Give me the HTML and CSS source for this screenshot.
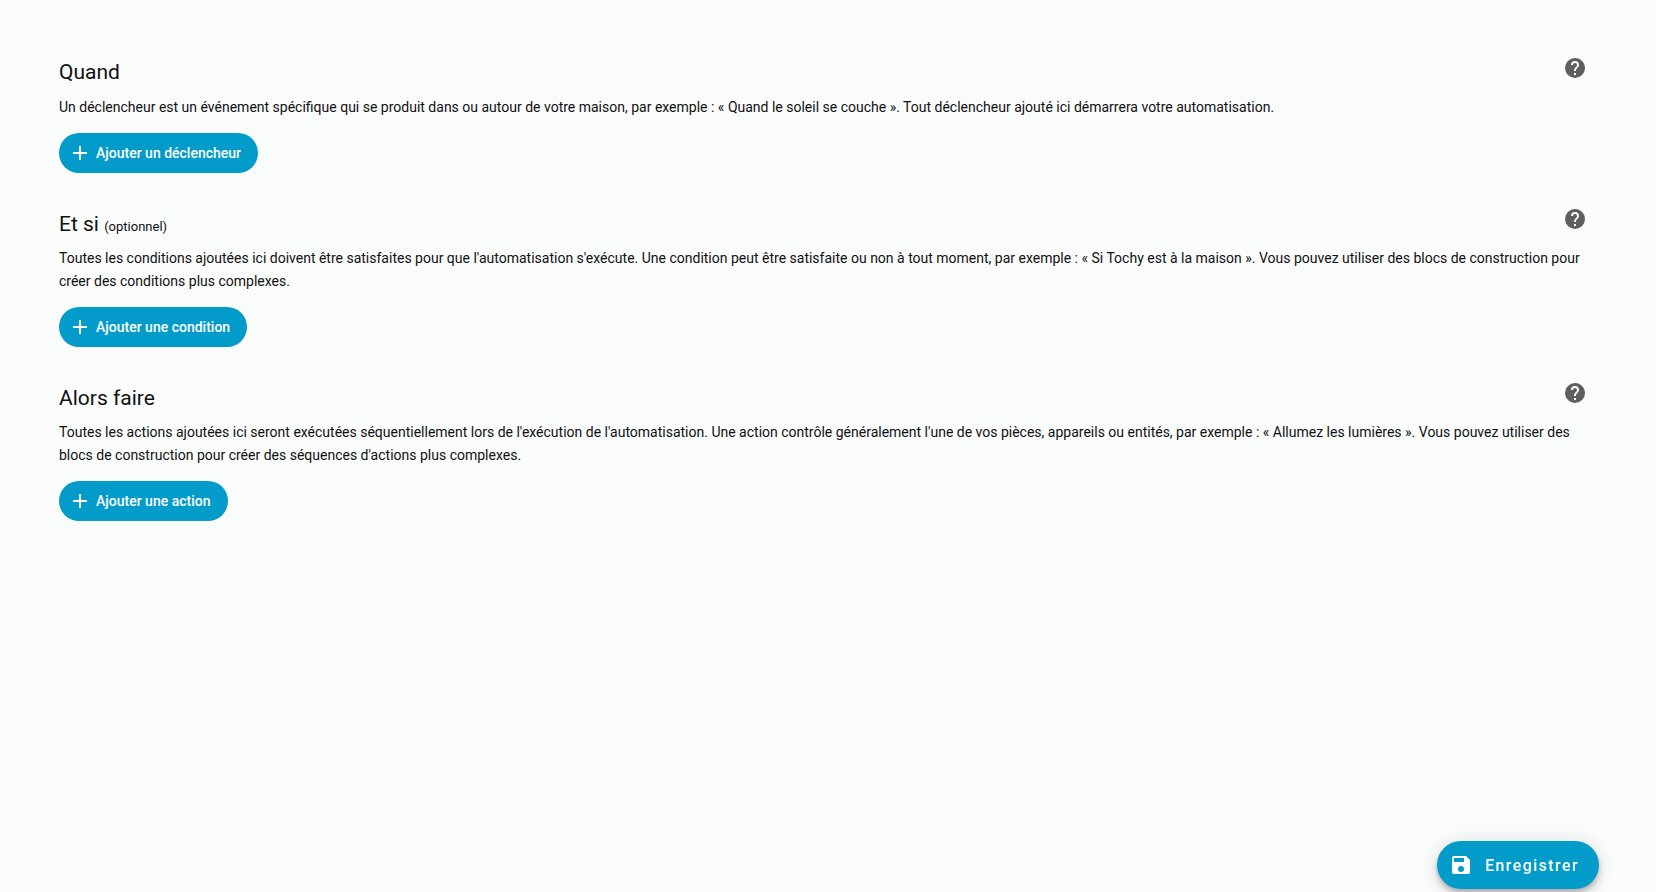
FILE: index.html
```html
<!DOCTYPE html>
<html lang="fr">
<head>
  <meta charset="UTF-8">
  <title>Automatisation</title>
  <link rel="stylesheet" href="styles.css">
</head>
<body>
<div class="content">
  <div class="section">
    <div class="head">
      <h2>Quand</h2>
      <svg class="help" viewBox="0 0 24 24"><path d="M15.07,11.25L14.17,12.17C13.45,12.89 13,13.5 13,15H11V14.5C11,13.39 11.45,12.39 12.17,11.67L13.41,10.41C13.78,10.05 14,9.55 14,9C14,7.89 13.1,7 12,7A2,2 0 0,0 10,9H8A4,4 0 0,1 12,5A4,4 0 0,1 16,9C16,9.88 15.64,10.67 15.07,11.25M13,19H11V17H13M12,2A10,10 0 0,0 2,12A10,10 0 0,0 12,22A10,10 0 0,0 22,12C22,6.47 17.5,2 12,2Z"/></svg>
    </div>
    <p>Un déclencheur est un événement spécifique qui se produit dans ou autour de votre maison, par exemple : « Quand le soleil se couche ». Tout déclencheur ajouté ici démarrera votre automatisation.</p>
    <button class="add"><svg viewBox="0 0 24 24"><path d="M19,13H13V19H11V13H5V11H11V5H13V11H19V13Z"/></svg>Ajouter un déclencheur</button>
  </div>
  <div class="section">
    <div class="head">
      <h2>Et si <span class="opt">(optionnel)</span></h2>
      <svg class="help" viewBox="0 0 24 24"><path d="M15.07,11.25L14.17,12.17C13.45,12.89 13,13.5 13,15H11V14.5C11,13.39 11.45,12.39 12.17,11.67L13.41,10.41C13.78,10.05 14,9.55 14,9C14,7.89 13.1,7 12,7A2,2 0 0,0 10,9H8A4,4 0 0,1 12,5A4,4 0 0,1 16,9C16,9.88 15.64,10.67 15.07,11.25M13,19H11V17H13M12,2A10,10 0 0,0 2,12A10,10 0 0,0 12,22A10,10 0 0,0 22,12C22,6.47 17.5,2 12,2Z"/></svg>
    </div>
    <p>Toutes les conditions ajoutées ici doivent être satisfaites pour que l'automatisation s'exécute. Une condition peut être satisfaite ou non à tout moment, par exemple : « Si Tochy est à la maison ». Vous pouvez utiliser des blocs de construction pour créer des conditions plus complexes.</p>
    <button class="add"><svg viewBox="0 0 24 24"><path d="M19,13H13V19H11V13H5V11H11V5H13V11H19V13Z"/></svg>Ajouter une condition</button>
  </div>
  <div class="section">
    <div class="head">
      <h2>Alors faire</h2>
      <svg class="help" viewBox="0 0 24 24"><path d="M15.07,11.25L14.17,12.17C13.45,12.89 13,13.5 13,15H11V14.5C11,13.39 11.45,12.39 12.17,11.67L13.41,10.41C13.78,10.05 14,9.55 14,9C14,7.89 13.1,7 12,7A2,2 0 0,0 10,9H8A4,4 0 0,1 12,5A4,4 0 0,1 16,9C16,9.88 15.64,10.67 15.07,11.25M13,19H11V17H13M12,2A10,10 0 0,0 2,12A10,10 0 0,0 12,22A10,10 0 0,0 22,12C22,6.47 17.5,2 12,2Z"/></svg>
    </div>
    <p>Toutes les actions ajoutées ici seront exécutées séquentiellement lors de l'exécution de l'automatisation. Une action contrôle généralement l'une de vos pièces, appareils ou entités, par exemple : « Allumez les lumières ». Vous pouvez utiliser des blocs de construction pour créer des séquences d'actions plus complexes.</p>
    <button class="add"><svg viewBox="0 0 24 24"><path d="M19,13H13V19H11V13H5V11H11V5H13V11H19V13Z"/></svg>Ajouter une action</button>
  </div>
</div>
<button class="save"><svg viewBox="0 0 24 24"><path d="M15,9H5V5H15M12,19A3,3 0 0,1 9,16A3,3 0 0,1 12,13A3,3 0 0,1 15,16A3,3 0 0,1 12,19M17,3H5C3.89,3 3,3.9 3,5V19A2,2 0 0,0 5,21H19A2,2 0 0,0 21,19V7L17,3Z"/></svg>Enregistrer</button>
</body>
</html>
```

FILE: styles.css
```css
html, body {
  margin: 0;
  padding: 0;
  height: 100%;
}

body {
  background: #fafbfb;
  color: #111;
  font-family: Roboto, sans-serif;
  font-size: 14px;
  overflow: hidden;
}

.content {
  padding: 56px 70px 0 59px;
}

.section {
  margin-bottom: 34px;
}

.head {
  display: flex;
  justify-content: space-between;
  align-items: flex-start;
  height: 32px;
}

h2 {
  margin: 0;
  font-size: 21px;
  font-weight: 400;
  line-height: 32px;
}

.section + .section h2 {
  padding-top: 1px;
}

.opt {
  font-size: 13px;
}

.help {
  width: 24px;
  height: 24px;
  fill: #5f5f5f;
  margin-right: -1px;
}

p {
  margin: 8px 0 14px;
  line-height: 23px;
}

.add {
  display: flex;
  align-items: center;
  height: 40px;
  padding: 0 17px 1px 9px;
  border: 0;
  border-radius: 20px;
  background: #039bc9;
  color: #fff;
  font-family: Roboto, sans-serif;
  font-size: 14px;
  font-weight: 500;
}

.add svg {
  width: 24px;
  height: 24px;
  fill: #fff;
  margin-right: 4px;
}

.save {
  position: fixed;
  right: 57px;
  bottom: 3px;
  display: flex;
  align-items: center;
  height: 48px;
  padding: 0 20px 0 12px;
  border: 0;
  border-radius: 24px;
  background: #039bc9;
  color: #fff;
  font-family: Roboto, sans-serif;
  font-size: 16px;
  font-weight: 500;
  letter-spacing: 1.4px;
  box-shadow: 0 3px 5px -1px rgba(0, 0, 0, 0.2), 0 6px 10px rgba(0, 0, 0, 0.14), 0 1px 18px rgba(0, 0, 0, 0.12);
}

.save svg {
  width: 24px;
  height: 24px;
  fill: #fff;
  margin-right: 12px;
}
```
